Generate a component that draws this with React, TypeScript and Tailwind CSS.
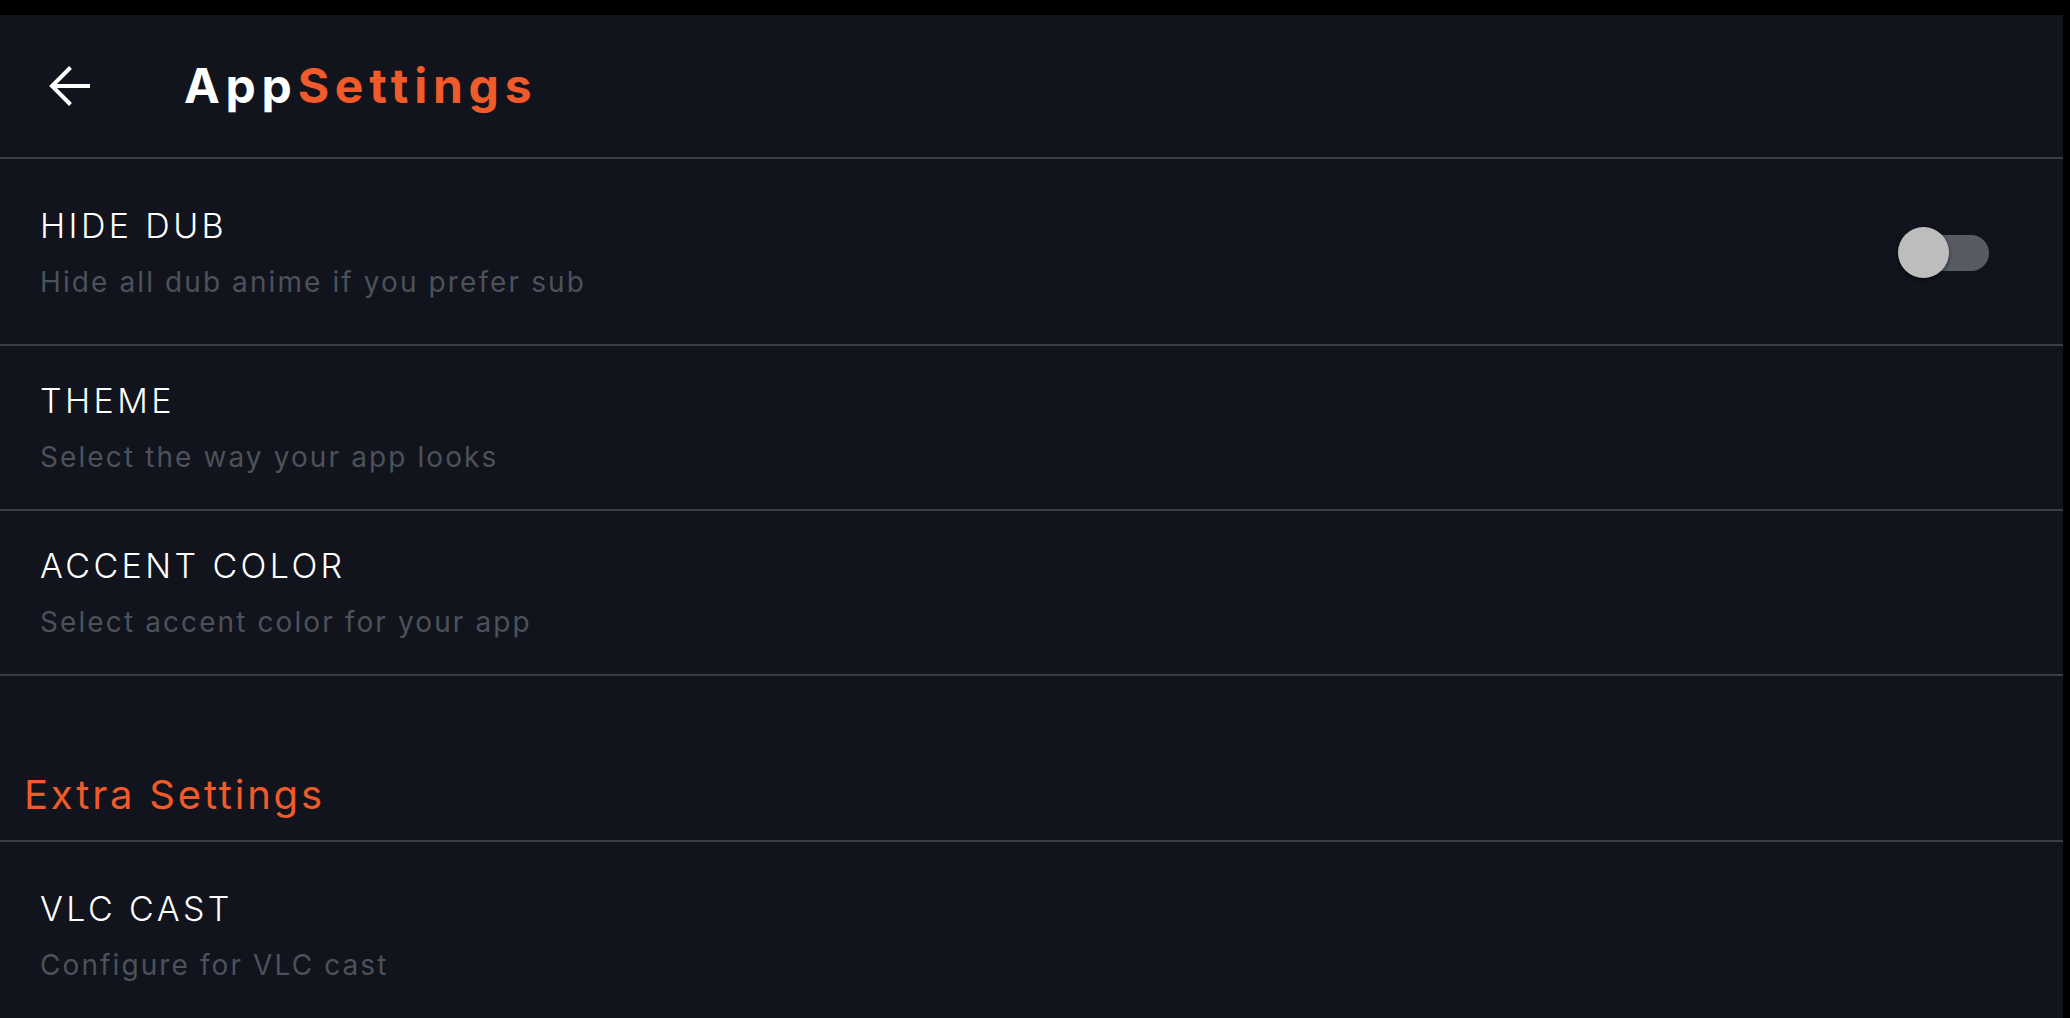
import React from "react";

const font = { fontFamily: "Inter, 'Liberation Sans', sans-serif" };

function Divider() {
  return <div className="h-[2px] w-full shrink-0 bg-[#3a3d45]" />;
}

function SettingRow({
  title,
  subtitle,
  tall,
  children,
}: {
  title: string;
  subtitle: string;
  tall?: boolean;
  children?: React.ReactNode;
}) {
  return (
    <div
      className={`flex shrink-0 items-center justify-between pl-[40px] pr-[74px] ${
        tall ? "pt-[47px] pb-[45px]" : "pt-[35px] pb-[35px]"
      }`}
    >
      <div className="flex flex-col gap-[19px]">
        <span className="text-[34px] font-light leading-[40px] text-white tracking-[0.1em]">
          {title}
        </span>
        <span className="text-[28px] leading-[34px] text-[#4c515b] tracking-[0.075em]">
          {subtitle}
        </span>
      </div>
      {children}
    </div>
  );
}

function Toggle() {
  return (
    <div className="relative flex h-[51px] w-[91px] items-center">
      <div className="ml-[4px] h-[36px] w-[87px] rounded-full bg-[#575b64]" />
      <div className="absolute left-0 top-0 h-[51px] w-[51px] rounded-full bg-[#bdbdbd] shadow-[0_2px_4px_rgba(0,0,0,0.5)]" />
    </div>
  );
}

export default function App() {
  return (
    <div className="flex h-[1018px] w-[2070px] flex-col overflow-hidden bg-black" style={font}>
      <div className="h-[15px] shrink-0" />
      <div className="flex min-h-0 flex-1 overflow-hidden">
        <div className="flex w-[2063px] flex-col overflow-hidden bg-[#11141c]">
          <div className="flex h-[142px] shrink-0 items-center">
            <button className="ml-[40px] flex h-[60px] w-[60px] items-center justify-center text-white">
              <svg
                width="60"
                height="60"
                viewBox="0 0 24 24"
                fill="none"
                stroke="currentColor"
                strokeWidth="1.6"
              >
                <path d="M20 12H4.8M12.2 4.6L4.8 12l7.4 7.4" />
              </svg>
            </button>
            <h1 className="ml-[84px] text-[48px] font-bold tracking-[0.12em] text-white">
              App<span className="text-[#f15a29]">Settings</span>
            </h1>
          </div>
          <Divider />
          <SettingRow
            title="HIDE DUB"
            subtitle="Hide all dub anime if you prefer sub"
            tall
          >
            <Toggle />
          </SettingRow>
          <Divider />
          <SettingRow title="THEME" subtitle="Select the way your app looks" />
          <Divider />
          <SettingRow
            title="ACCENT COLOR"
            subtitle="Select accent color for your app"
          />
          <Divider />
          <div className="shrink-0 pl-[24px] pt-[95px] pb-[21px]">
            <h2 className="text-[40px] leading-[48px] text-[#f15a29] tracking-[0.07em]">
              Extra Settings
            </h2>
          </div>
          <Divider />
          <SettingRow
            title="VLC CAST"
            subtitle="Configure for VLC cast"
            tall
          />
        </div>
      </div>
    </div>
  );
}
